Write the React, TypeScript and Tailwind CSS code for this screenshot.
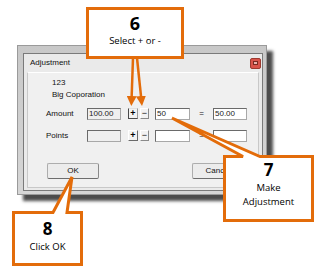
import React from "react";

const dlgFont = { fontFamily: '"Liberation Sans", Arial, sans-serif' };
const callFont = { fontFamily: '"Open Sans", "Noto Sans", sans-serif' };

function Field({ text, disabled, w }: { text?: string; disabled?: boolean; w: string }) {
  return (
    <div
      className={`${w} h-[12px] border border-[#a8a8a8] border-t-[#6a6a6a] border-l-[#6a6a6a] ${disabled ? "bg-[#efefef]" : "bg-white"} text-[8px] leading-[10px] pl-[1px] text-[#222]`}
    >
      {text}
    </div>
  );
}

function PM({ pressed }: { pressed?: boolean }) {
  return (
    <div className="flex items-center gap-[2px]">
      <div
        className={`w-[10px] h-[11px] flex items-center justify-center bg-[#f2f2f2] border ${pressed ? "border-[#4a4a4a] border-t-[#e0e0e0] border-r-[#9a9a9a]" : "border-[#6a6a6a] border-t-white border-l-white"} text-[9px] font-bold leading-none text-black`}
      >
        +
      </div>
      <div className="w-[9px] h-[11px] flex items-center justify-center bg-[#f2f2f2] border border-[#8a8a8a] border-t-white border-l-white text-[9px] leading-none text-black">
        −
      </div>
    </div>
  );
}

export default function App() {
  return (
    <div className="relative w-[320px] h-[273px] bg-white overflow-hidden pt-[45px] pl-[17px]" style={dlgFont}>
      {/* Dialog window */}
      <div className="w-[250px] h-[150px] bg-[linear-gradient(#c8c8c8,#d6d6d6)] border border-[#9a9a9a] pt-[7px] pl-[5px] pr-[3px] pb-[3px] shadow-[6px_6px_3px_rgba(0,0,0,0.7)]">
        <div className="w-full h-full border border-[#7a7a7a] bg-[#eaeaea] flex flex-col">
          <div className="h-[18px] flex items-center justify-between pl-[6px] pr-[1px]">
            <span className="text-[8px] text-[#111]">Adjustment</span>
            <div className="w-[11px] h-[11px] rounded-[2px] bg-[#d9534a] border border-[#9c3a30] flex items-center justify-center">
              <div className="w-[5px] h-[4px] bg-[#e8b4ae] border border-[#7a2a22]" />
            </div>
          </div>
          <div className="flex-1 mx-[3px] mb-[2px] bg-[#f0f0f0] border border-[#c8c8c8] border-t-white flex flex-col text-[8px] text-[#111]">
            <div className="pl-[24px] pt-[4px] leading-[12px]">
              <div>123</div>
              <div>Big Coporation</div>
            </div>
            <div className="flex items-center mt-[6px] pl-[18px] h-[13px]">
              <span className="w-[41px]">Amount</span>
              <Field text="100.00" disabled w="w-[34px]" />
              <div className="ml-[7px]">
                <PM pressed />
              </div>
              <div className="ml-[6px]">
                <Field text="50" w="w-[35px]" />
              </div>
              <span className="w-[23px] text-center">=</span>
              <Field text="50.00" w="w-[34px]" />
            </div>
            <div className="flex items-center mt-[9px] pl-[18px] h-[13px]">
              <span className="w-[41px]">Points</span>
              <Field disabled w="w-[34px]" />
              <div className="ml-[7px]">
                <PM />
              </div>
              <div className="ml-[6px]">
                <Field w="w-[35px]" />
              </div>
              <span className="w-[23px] text-center">=</span>
              <Field w="w-[34px]" />
            </div>
            <div className="flex mt-[21px] pl-[19px]">
              <div className="w-[52px] h-[16px] bg-[#ececec] border border-[#adadad] border-b-[#6d6d6d] border-r-[#8a8a8a] rounded-[2px] flex items-center justify-center">
                OK
              </div>
              <div className="ml-[93px] w-[52px] h-[16px] bg-[#ececec] border border-[#adadad] border-b-[#6d6d6d] border-r-[#8a8a8a] rounded-[2px] flex items-center justify-center">
                Cancel
              </div>
            </div>
          </div>
        </div>
      </div>

      {/* Callout drawings */}
      <svg className="absolute left-0 top-0 pointer-events-none" width="320" height="273" viewBox="0 0 320 273">
        <defs>
          <marker id="ah" markerWidth="4" markerHeight="4" refX="2" refY="2" orient="auto" markerUnits="strokeWidth">
            <path d="M0,0 L4,2 L0,4 Z" fill="#e36c0a" />
          </marker>
        </defs>
        <rect x="87.5" y="8.5" width="95" height="49" fill="white" stroke="#e36c0a" strokeWidth="3" />
        <line x1="133" y1="58" x2="131.5" y2="101" stroke="#e36c0a" strokeWidth="2.5" markerEnd="url(#ah)" />
        <line x1="137" y1="58" x2="141.5" y2="101" stroke="#e36c0a" strokeWidth="2.5" markerEnd="url(#ah)" />
        <polygon
          points="224.5,156.5 243,156.5 172,118 260,156.5 312.5,156.5 312.5,220.5 224.5,220.5"
          fill="white"
          stroke="#e36c0a"
          strokeWidth="3"
          strokeLinejoin="miter"
        />
        <polygon
          points="13.5,212.5 53,212.5 72,177 67,212.5 81.5,212.5 81.5,264.5 13.5,264.5"
          fill="white"
          stroke="#e36c0a"
          strokeWidth="3"
          strokeLinejoin="miter"
        />
      </svg>

      {/* Callout texts */}
      <div className="absolute left-[89px] top-[12px] w-[92px] flex flex-col items-center text-black" style={callFont}>
        <span className="text-[18px] font-bold leading-[22px]">6</span>
        <span className="text-[9.5px] leading-[12px] mt-[1px]">Select + or -</span>
      </div>
      <div className="absolute left-[226px] top-[159px] w-[85px] flex flex-col items-center text-black" style={callFont}>
        <span className="text-[17px] font-bold leading-[21px]">7</span>
        <span className="text-[9.5px] leading-[14px] mt-[1px]">Make</span>
        <span className="text-[9.5px] leading-[14px]">Adjustment</span>
      </div>
      <div className="absolute left-[15px] top-[218px] w-[65px] flex flex-col items-center text-black" style={callFont}>
        <span className="text-[17px] font-bold leading-[21px]">8</span>
        <span className="text-[9.5px] leading-[13px] mt-[1px]">Click OK</span>
      </div>
    </div>
  );
}
